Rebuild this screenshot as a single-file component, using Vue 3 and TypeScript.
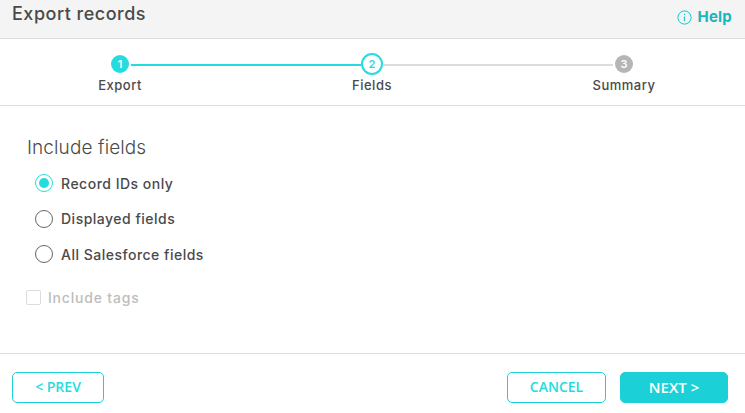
<template>
  <div class="dialog">
    <header class="top">
      <h1 class="title">Export records</h1>
      <a class="help">
        <svg class="help-icon" width="15" height="15" viewBox="0 0 15 15" fill="none">
          <circle cx="7.5" cy="7.5" r="6.6" stroke="#1fc4cc" stroke-width="1" />
          <path d="M7.5 6.6v4.6M7.5 3.8v1.3" stroke="#1fc4cc" stroke-width="1.2" />
        </svg>
        Help
      </a>
    </header>

    <section class="stepper">
      <div v-for="(step, i) in steps" :key="step.label" class="step">
        <div class="track">
          <span class="seg" :class="segClass(i, 'left')"></span>
          <span class="dot" :class="step.state">{{ i + 1 }}</span>
          <span class="seg" :class="segClass(i, 'right')"></span>
        </div>
        <div class="step-label">{{ step.label }}</div>
      </div>
    </section>

    <main class="body">
      <h2 class="heading">Include fields</h2>
      <div class="radios">
        <label v-for="opt in options" :key="opt" class="radio-row">
          <span class="radio" :class="{ on: opt === selected }"></span>
          {{ opt }}
        </label>
      </div>
      <label class="check-row">
        <span class="check"></span>
        Include tags
      </label>
    </main>

    <footer class="bottom">
      <button class="btn prev">&lt; PREV</button>
      <div class="right-btns">
        <button class="btn cancel">CANCEL</button>
        <button class="btn next">NEXT &gt;</button>
      </div>
    </footer>
  </div>
</template>

<script setup lang="ts">
import { ref } from "vue";

const steps = [
  { label: "Export", state: "done" },
  { label: "Fields", state: "current" },
  { label: "Summary", state: "todo" },
];
const options = ["Record IDs only", "Displayed fields", "All Salesforce fields"];
const selected = ref("Record IDs only");

// Line pieces either side of each step's dot
const segClass = (i: number, side: string) => {
  if ((i === 0 && side === "left") || (i === 2 && side === "right")) return "none";
  if (i === 0 || (i === 1 && side === "left")) return "active";
  return "idle";
};
</script>

<style>
body {
  background: #fff;
}
</style>

<style scoped>
.dialog {
  width: 745px;
  height: 413px;
  display: flex;
  flex-direction: column;
  font-family: Inter, "Liberation Sans", sans-serif;
  color: #4a4a4a;
  overflow: hidden;
}
.top {
  height: 38px;
  flex: none;
  display: flex;
  align-items: flex-start;
  justify-content: space-between;
  padding: 0 13px 0 12px;
  background: #f4f4f4;
  border-bottom: 1px solid #dcdcdc;
}
.title {
  margin: 2px 0 0;
  font-size: 18px;
  line-height: 24px;
  font-weight: 500;
  letter-spacing: 0.5px;
}
.help {
  margin-top: 8px;
  display: flex;
  align-items: center;
  gap: 6px;
  font-size: 15px;
  line-height: 18px;
  font-weight: 700;
  letter-spacing: 0.2px;
  color: #1ab5bd;
}
.stepper {
  height: 66px;
  flex: none;
  display: flex;
  margin-left: -6px;
  border-bottom: 1px solid #dcdcdc;
}
.step {
  width: 252px;
  flex: none;
  padding-top: 14px;
}
.track {
  height: 22px;
  display: flex;
  align-items: center;
}
.seg {
  flex: 1;
  height: 2px;
  margin-top: 2px;
}
.seg.active {
  background: #26dbe0;
}
.seg.idle {
  background: #dcdcdc;
}
.dot {
  flex: none;
  width: 18px;
  height: 18px;
  margin: 0 2px;
  border-radius: 50%;
  display: flex;
  align-items: center;
  justify-content: center;
  font-size: 11px;
  font-weight: 600;
  color: #fff;
  box-sizing: border-box;
}
.dot.done {
  background: #26dbe0;
}
.dot.current {
  width: 22px;
  height: 22px;
  margin: 0;
  background: #fff;
  border: 2px solid #26dbe0;
  color: #26dbe0;
}
.dot.todo {
  background: #b5b5b5;
}
.step-label {
  margin-top: 1px;
  text-align: center;
  font-size: 13px;
  line-height: 18px;
  font-weight: 500;
  letter-spacing: 0.5px;
}
.body {
  flex: 1;
  padding: 30px 0 0 27px;
}
.heading {
  margin: 0;
  font-size: 19px;
  line-height: 24px;
  font-weight: 300;
  letter-spacing: 0.1px;
}
.radios {
  margin-top: 14px;
  margin-left: 8px;
  display: flex;
  flex-direction: column;
  gap: 17.6px;
}
.radio-row {
  display: flex;
  align-items: center;
  gap: 8px;
  height: 18px;
  font-size: 14px;
  font-weight: 500;
  letter-spacing: 0.5px;
}
.radio {
  width: 18px;
  height: 18px;
  box-sizing: border-box;
  border: 1px solid #666;
  border-radius: 50%;
  display: flex;
  align-items: center;
  justify-content: center;
}
.radio.on {
  border-color: #26dbe0;
}
.radio.on::after {
  content: "";
  width: 10px;
  height: 10px;
  border-radius: 50%;
  background: #26dbe0;
}
.check-row {
  margin-top: 26px;
  margin-left: -1px;
  display: flex;
  align-items: center;
  gap: 7px;
  height: 16px;
  font-size: 14px;
  font-weight: 500;
  letter-spacing: 0.8px;
  color: #bdbdbd;
}
.check {
  width: 15px;
  height: 15px;
  box-sizing: border-box;
  border: 1px solid #dcdcdc;
  border-radius: 2px;
}
.bottom {
  height: 60px;
  flex: none;
  box-sizing: border-box;
  border-top: 1px solid #dcdcdc;
  padding: 18px 17px 0 12px;
  display: flex;
  align-items: flex-start;
  justify-content: space-between;
}
.right-btns {
  display: flex;
  gap: 14px;
}
.btn {
  height: 31px;
  box-sizing: border-box;
  border: 1px solid #1bd0d6;
  border-radius: 5px;
  background: #fff;
  color: #26dbe0;
  font-family: "Open Sans", sans-serif;
  font-size: 14px;
  font-weight: 600;
  padding: 0 0 2px;
}
.prev {
  width: 92px;
}
.cancel {
  width: 99px;
}
.next {
  width: 108px;
  background: #1bd0d6;
  color: #fff;
  font-size: 15px;
}
</style>
